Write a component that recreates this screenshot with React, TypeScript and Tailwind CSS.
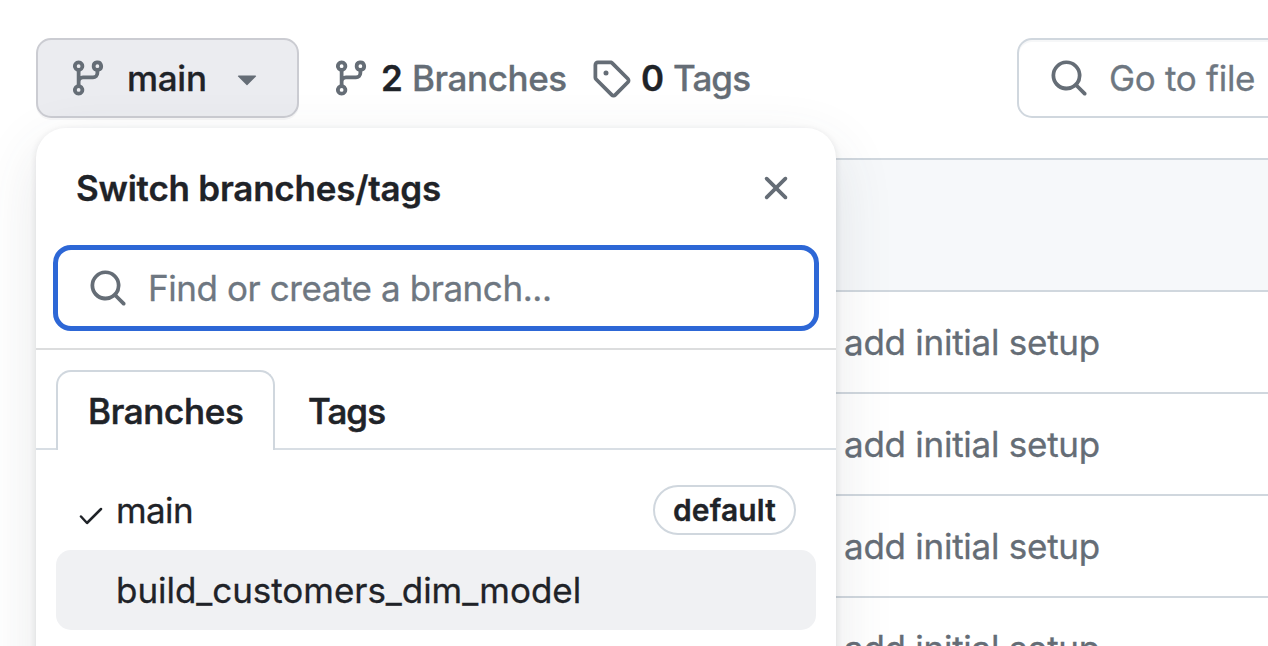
import React from "react";

const PATHS = {
  branch:
    "M9.5 3.25a2.25 2.25 0 1 1 3 2.122V6A2.5 2.5 0 0 1 10 8.5H6a1 1 0 0 0-1 1v1.128a2.251 2.251 0 1 1-1.5 0V5.372a2.25 2.25 0 1 1 1.5 0v1.836A2.493 2.493 0 0 1 6 7h4a1 1 0 0 0 1-1v-.628A2.25 2.25 0 0 1 9.5 3.25Zm-6 0a.75.75 0 1 0 1.5 0 .75.75 0 0 0-1.5 0Zm8.25-.75a.75.75 0 1 0 0 1.5.75.75 0 0 0 0-1.5ZM4.25 12a.75.75 0 1 0 0 1.5.75.75 0 0 0 0-1.5Z",
  tag: "M1 7.775V2.75C1 1.784 1.784 1 2.75 1h5.025c.464 0 .91.184 1.238.513l6.25 6.25a1.75 1.75 0 0 1 0 2.474l-5.026 5.026a1.75 1.75 0 0 1-2.474 0l-6.25-6.25A1.752 1.752 0 0 1 1 7.775Zm1.5 0c0 .066.026.13.073.177l6.25 6.25a.25.25 0 0 0 .354 0l5.025-5.025a.25.25 0 0 0 0-.354l-6.25-6.25a.25.25 0 0 0-.177-.073H2.75a.25.25 0 0 0-.25.25ZM6 5a1 1 0 1 1 0 2 1 1 0 0 1 0-2Z",
  search:
    "M10.68 11.74a6 6 0 0 1-7.922-8.982 6 6 0 0 1 8.982 7.922l3.04 3.04a.749.749 0 0 1-.326 1.275.749.749 0 0 1-.734-.215ZM11.5 7a4.499 4.499 0 1 0-8.997 0A4.499 4.499 0 0 0 11.5 7Z",
  close:
    "M3.72 3.72a.75.75 0 0 1 1.06 0L8 6.94l3.22-3.22a.749.749 0 0 1 1.275.326.749.749 0 0 1-.215.734L9.06 8l3.22 3.22a.749.749 0 0 1-.326 1.275.749.749 0 0 1-.734-.215L8 9.06l-3.22 3.22a.751.751 0 0 1-1.042-.018.751.751 0 0 1-.018-1.042L6.94 8 3.72 4.78a.75.75 0 0 1 0-1.06Z",
  caret:
    "m4.427 7.427 3.396 3.396a.25.25 0 0 0 .354 0l3.396-3.396A.25.25 0 0 0 11.396 7H4.604a.25.25 0 0 0-.177.427Z",
};

function Icon({ name, className = "" }: { name: keyof typeof PATHS; className?: string }) {
  return (
    <svg viewBox="0 0 16 16" className={`size-10 shrink-0 fill-[#656d76] ${className}`} aria-hidden="true">
      <path d={PATHS[name]} />
    </svg>
  );
}

const COMMITS = [0, 1, 2, 3];

function Toolbar() {
  return (
    <div className="flex h-20 items-center">
      <button className="flex h-20 w-[263px] shrink-0 items-center rounded-[15px] border-2 border-[#cbccd2] bg-[#ebecf0] pl-[30px] shadow-[0_2px_0_rgba(31,35,40,0.04)]">
        <Icon name="branch" />
        <span className="ml-[19px] w-[80px] text-left font-medium tracking-[-0.3px]">main</span>
        <Icon name="caret" className="ml-5" />
      </button>
      <a className="ml-8 flex w-[260px] shrink-0 items-center">
        <Icon name="branch" />
        <span className="ml-[10px] w-[31px] font-semibold">2</span>
        <span className="font-medium tracking-[-0.4px] text-[#656d76]">Branches</span>
      </a>
      <a className="flex w-[426px] shrink-0 items-center">
        <Icon name="tag" />
        <span className="ml-[10px] w-[32px] font-semibold">0</span>
        <span className="font-medium tracking-[-0.9px] text-[#656d76]">Tags</span>
      </a>
      <div className="flex h-20 w-[300px] shrink-0 items-center rounded-[15px] border-2 border-[#d0d7de] bg-white pl-[30px] shadow-[inset_0_2px_0_rgba(208,215,222,0.2)]">
        <Icon name="search" />
        <span className="ml-[20px] tracking-[-0.3px] text-[#6e7781]">Go to file</span>
      </div>
    </div>
  );
}

function CommitTable() {
  return (
    <div className="mt-10 w-[1300px] border-t-2 border-[#d0d7de]">
      <div className="h-[132px] border-b-2 border-[#d0d7de] bg-[#f6f8fa]" />
      {COMMITS.map((id) => (
        <div key={id} className="flex h-[102px] items-center border-b-2 border-[#d0d7de] pl-[808px] text-[#656d76]">
          <span className="tracking-[-0.26px]">add initial setup</span>
        </div>
      ))}
    </div>
  );
}

function BranchMenu() {
  return (
    <div className="absolute top-[128px] left-9 h-[700px] w-[800px] rounded-[30px] bg-white shadow-[0_2px_7px_rgba(31,35,40,0.12),0_20px_60px_rgba(66,74,83,0.12)]">
      <div className="flex h-[117px] items-center justify-between px-10 pt-[3px]">
        <h2 className="font-semibold tracking-[-0.23px]">Switch branches/tags</h2>
        <Icon name="close" />
      </div>
      <div className="mx-[17px] flex h-[86px] items-center rounded-[18px] border-5 border-[#2d67d6] pl-[30px]">
        <Icon name="search" />
        <span className="ml-[20px] tracking-[-0.43px] text-[#6e7781]">Find or create a branch...</span>
      </div>
      <div className="mt-[17px] h-[22px] border-t-2 border-[#dcddde]" />
      <div className="flex h-20 font-medium [-webkit-text-stroke:0.6px_#1f2328]">
        <div className="w-5 border-b-2 border-[#d8dee4]" />
        <div className="flex w-[219px] items-center rounded-t-[15px] border-2 border-b-0 border-[#d0d7de] pl-[30px]">
          <span className="tracking-[-0.3px]">Branches</span>
        </div>
        <div className="flex flex-1 items-center border-b-2 border-[#d8dee4] pt-1 pl-[33px]">
          <span className="tracking-[-0.9px]">Tags</span>
        </div>
      </div>
      <div className="mx-5 mt-5">
        <div className="flex h-20 items-center pr-5 pl-[23px]">
          <svg viewBox="0 0 24 20" className="mt-[11px] h-5 w-6 fill-none stroke-[#1f2328] stroke-[2.5]" aria-hidden="true">
            <path d="M2 10.5 8 17 22 3" strokeLinecap="round" strokeLinejoin="round" />
          </svg>
          <span className="ml-[13px] flex-1 tracking-[-0.6px]">main</span>
          <span className="flex h-[50px] w-[143px] items-center justify-center rounded-full border-2 border-[#d0d7de] text-[30px] font-semibold tracking-[0.15px]">
            default
          </span>
        </div>
        <div className="flex h-20 items-center rounded-[15px] bg-[#f0f1f3] pl-[60px]">
          <span className="tracking-[-0.04px]">build_customers_dim_model</span>
        </div>
      </div>
    </div>
  );
}

export default function App() {
  return (
    <main className="relative h-[646px] w-[1268px] overflow-hidden bg-white pt-[38px] pl-9 font-[Inter,sans-serif] text-[35px] leading-[52px] whitespace-nowrap text-[#1f2328] [-webkit-text-stroke:0.3px_currentColor]">
      <Toolbar />
      <CommitTable />
      <BranchMenu />
    </main>
  );
}
